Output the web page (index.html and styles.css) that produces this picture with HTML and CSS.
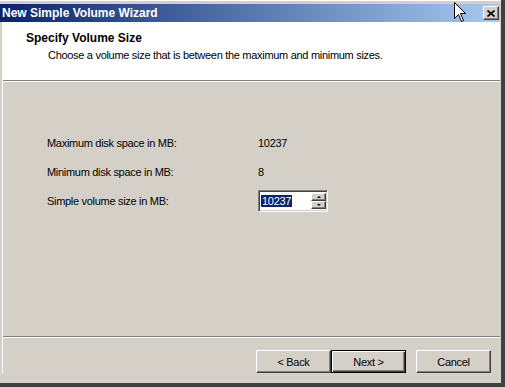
FILE: index.html
```html
<!DOCTYPE html>
<html lang="en">
<head>
    <meta charset="UTF-8">
    <title>New Simple Volume Wizard</title>
    <link rel="stylesheet" href="styles.css">
</head>
<body>

    <div class="window">
        <!-- Title bar -->
        <div class="titlebar">
            <span class="title">New Simple Volume Wizard</span>
            <button class="close-btn" aria-label="Close">
                <svg width="8" height="7" viewBox="0 0 8 7">
                    <path d="M0.5 0.5 L7.5 6.5 M7.5 0.5 L0.5 6.5" stroke="#000" stroke-width="1.6" fill="none"/>
                </svg>
            </button>
        </div>

        <div class="client">
            <!-- Wizard header -->
            <div class="header">
                <h1 class="heading">Specify Volume Size</h1>
                <p class="subheading">Choose a volume size that is between the maximum and minimum sizes.</p>
            </div>

            <!-- Page body -->
            <div class="page">
                <div class="row">
                    <span class="label">Maximum disk space in MB:</span>
                    <span class="value">10237</span>
                </div>
                <div class="row">
                    <span class="label">Minimum disk space in MB:</span>
                    <span class="value">8</span>
                </div>
                <div class="row row-input">
                    <label class="label" for="volumeSize">Simple volume size in MB:</label>
                    <div class="spin" id="volumeSize">
                        <div class="spin-text"><span class="selected">10237</span></div>
                        <div class="spin-buttons">
                            <span class="spin-btn"><i class="arrow-up"></i></span>
                            <span class="spin-btn"><i class="arrow-down"></i></span>
                        </div>
                    </div>
                </div>
            </div>

            <!-- Buttons -->
            <div class="footer">
                <button class="btn">&lt; Back</button>
                <button class="btn btn-default">Next &gt;</button>
                <button class="btn btn-cancel">Cancel</button>
            </div>
        </div>

        <svg class="cursor" width="13" height="21" viewBox="0 0 13 21">
            <path d="M0.5 0.5 L0.5 16.5 L4.5 12.5 L7.5 19.5 L9.5 18.5 L6.5 11.5 L11.5 11.5 Z" fill="#fff" stroke="#000" stroke-width="1"/>
        </svg>
    </div>

</body>
</html>
```

FILE: styles.css
```css
body { margin: 0; background: #d4d0c8; font-family: "Liberation Sans", Arial, sans-serif; font-size: 11px; letter-spacing: -0.3px; color: #000; }

.window { position: relative; width: 505px; height: 387px; box-sizing: border-box; background: #d4d0c8; padding: 4px 1px 0 0; border-right: 4px solid #404040; border-bottom: 4px solid #404040; box-shadow: inset 0 1px 0 #fff; }

.titlebar { height: 18px; display: flex; align-items: center; justify-content: space-between; background: linear-gradient(to right, #0a246a, #a6caf0); }
.title { padding-left: 2px; color: #fff; font-weight: bold; font-size: 12px; letter-spacing: 0; line-height: 18px; }
.close-btn { width: 16px; height: 14px; margin-right: 1px; padding: 0; display: flex; align-items: center; justify-content: center; background: #d4d0c8; border: 1px solid; border-color: #fff #404040 #404040 #fff; box-shadow: inset -1px -1px 0 #808080; }

.client { margin-left: 2px; border-left: 1px solid #fff; }

.header { height: 58px; box-sizing: content-box; background: #fff; border-bottom: 1px solid #808080; padding: 0 0 0 23px; }
.heading { margin: 0; padding-top: 9px; font-size: 12px; font-weight: bold; letter-spacing: 0; line-height: 14px; }
.subheading { margin: 4px 0 0 22px; line-height: 13px; }

.page { height: 204px; border-top: 1px solid #fff; border-bottom: 1px solid #808080; padding: 50px 0 0 44px; }
.row { display: flex; align-items: center; height: 22px; margin-bottom: 7px; }
.row + .row-input { margin-top: 3px; }
.label { width: 211px; }

.spin { width: 70px; height: 22px; box-sizing: border-box; display: flex; background: #fff; border: 1px solid; border-color: #808080 #fff #fff #808080; box-shadow: inset 1px 1px 0 #404040, inset -1px -1px 0 #d4d0c8; padding: 2px 1px 2px 2px; }
.spin-text { flex: 1; display: flex; align-items: center; }
.selected { background: #0a246a; color: #fff; line-height: 12px; padding: 0 1px; }
.spin-buttons { width: 15px; display: flex; flex-direction: column; }
.spin-btn { flex: 1; display: flex; align-items: center; justify-content: center; background: #d4d0c8; border: 1px solid; border-color: #fff #404040 #404040 #fff; box-shadow: inset -1px -1px 0 #808080; }
.arrow-up { border-left: 2px solid transparent; border-right: 2px solid transparent; border-bottom: 2px solid #000; }
.arrow-down { border-left: 2px solid transparent; border-right: 2px solid transparent; border-top: 2px solid #000; }

.footer { border-top: 1px solid #fff; padding: 12px 9px 0 0; display: flex; justify-content: flex-end; }
.btn { width: 75px; height: 23px; padding: 0; font-family: inherit; font-size: 11px; letter-spacing: -0.3px; color: #000; background: #d4d0c8; border: 1px solid; border-color: #fff #404040 #404040 #fff; box-shadow: inset -1px -1px 0 #808080; }
.btn-default { border-color: #000; box-shadow: inset 1px 1px 0 #fff, inset -1px -1px 0 #404040, inset -2px -2px 0 #808080; }
.btn-cancel { margin-left: 10px; }

.cursor { position: absolute; left: 454px; top: 2px; }
```
